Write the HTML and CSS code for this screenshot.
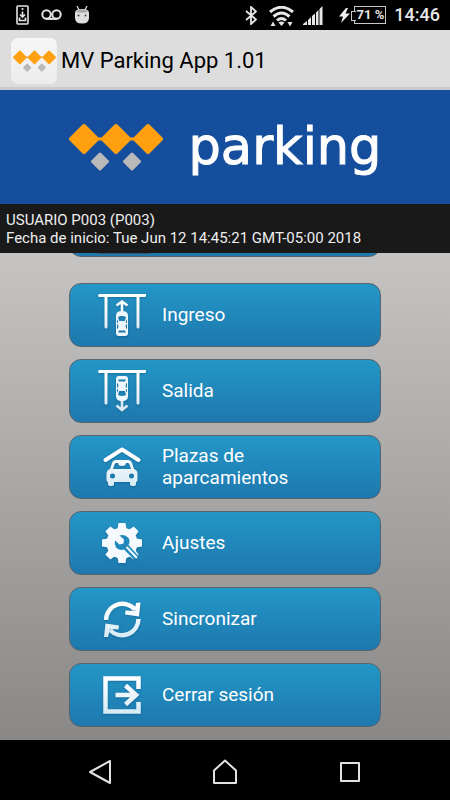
FILE: index.html
```html
<!DOCTYPE html>
<html lang="es">
<head>
<meta charset="utf-8">
<meta name="viewport" content="width=device-width, initial-scale=1">
<title>MV Parking App</title>
<link rel="stylesheet" href="styles.css">
</head>
<body>
<svg class="defs" aria-hidden="true">
  <defs>
    <linearGradient id="ice" gradientUnits="userSpaceOnUse" x1="0" y1="0" x2="0" y2="48">
      <stop offset="0.2" stop-color="#fff"/><stop offset="1" stop-color="#cfe6f3"/>
    </linearGradient>
    <symbol id="mark" viewBox="0 0 94 48">
      <g fill="#ffa010" stroke="#ffa010" stroke-width="4" stroke-linejoin="round">
        <path d="M15 3 28 16 15 29 2 16Z"/><path d="M47 3 60 16 47 29 34 16Z"/><path d="M79 3 92 16 79 29 66 16Z"/>
        <path d="M28 16H66" stroke-width="3"/>
      </g>
      <g fill="#b9b9b9" stroke="#b9b9b9" stroke-width="3" stroke-linejoin="round">
        <path d="M31 31 38.500 38.500 31 46 23.500 38.500Z"/><path d="M63 31 70.500 38.500 63 46 55.500 38.500Z"/>
      </g>
    </symbol>
    <symbol id="car" viewBox="0 0 12 25">
      <path fill="#eef7fb" fill-rule="evenodd" d="M2.500.5Q6-.5 9.500.5 12 1.500 12 4.500V22Q12 25 9 25H3Q0 25 0 22V4.500Q0 1.500 2.500.5ZM2 6 3.200 10H8.800L10 6Q6 4 2 6ZM1 8V12L2.200 11.500V10.500ZM11 8V12L9.800 11.500V10.500ZM1 13.500V18L2.200 17V13.500ZM11 13.500V18L9.800 17V13.500ZM3 19.500 2 21.500H10L9 19.500Z"/>
    </symbol>
  </defs>
</svg>

<header class="status">
  <div class="status-group status-left">
    <svg width="13" height="20" viewBox="0 0 13 20" fill="none" stroke="#e4e4e4"><rect x="1" y="1" width="11" height="18" rx="1" stroke-width="1.600"/><path d="M6.500 3V5M6.500 6.500V12M4 9.500 6.500 12 9 9.500M3.500 12.500V15.500H9.500V12.500" stroke-width="1.700"/></svg>
    <svg width="21" height="12" viewBox="0 0 21 12" fill="none" stroke="#e4e4e4" stroke-width="2"><circle cx="5.500" cy="5.500" r="4.200"/><circle cx="15.500" cy="5.500" r="4.200"/><path d="M5 9.900H16"/></svg>
    <svg width="16" height="18" viewBox="0 0 16 18"><path d="M3 0 5 4M13 0 11 4" stroke="#d8d8d8" stroke-width="1.300"/><path d="M1 7Q1 3 8 3T15 7V12Q15 17.500 8 17.500T1 12Z" fill="#dedede"/><path d="M2 6Q4 3.500 8 3.500T14 6Q8 7.500 2 6" fill="#a7a7a7"/><circle cx="4.500" cy="9.500" r="1" fill="#444"/><circle cx="11.500" cy="9.500" r="1" fill="#444"/></svg>
  </div>
  <div class="status-group status-right">
    <svg width="12" height="19" viewBox="0 0 12 19" fill="none" stroke="#e6e6e6" stroke-width="1.800"><path d="M1 5 11 13.500 6 18V1L11 5.500 1 14"/></svg>
    <svg class="wifi" width="25" height="21" viewBox="0 0 25 21"><g fill="none" stroke="#e6e6e6" stroke-width="3"><path d="M1 6Q12.500-3.500 24 6M4.500 10.500Q12.500 3.500 20.500 10.500M8 14.500Q12.500 10.500 17 14.500"/></g><path d="M9.500 16.500Q12.500 14.500 15.500 16.500L12.500 20ZM1.500 20 4 15.500 6.500 20ZM18.500 16H23.500L21 20.500Z" fill="#e6e6e6"/></svg>
    <svg width="20" height="19" viewBox="0 0 20 19" fill="#e6e6e6"><path d="M0 19V18L4 15V19ZM5 19V14L8 11V19ZM9 19V10L12 7.500V19ZM13 19V6.500L15.500 4V19ZM16.500 19V3L19.500 0V19Z"/></svg>
    <svg class="bolt" width="11" height="15" viewBox="0 0 11 15"><path d="M7 0 0 8.500H4L2 15 11 5.500H6.500L9 0Z" fill="#f2f2f2"/></svg>
    <span class="battery">71 %</span>
    <span class="clock">14:46</span>
  </div>
</header>

<div class="titlebar">
  <span class="app-icon"><svg width="43" height="22" viewBox="0 0 94 48"><use href="#mark"/></svg></span>
  <h1>MV Parking App 1.01</h1>
</div>

<div class="banner">
  <svg width="94" height="48" viewBox="0 0 94 48"><use href="#mark"/></svg>
  <span class="wordmark">parking</span>
</div>

<div class="session">
  <p>USUARIO P003 (P003)</p>
  <p>Fecha de inicio: Tue Jun 12 14:45:21 GMT-05:00 2018</p>
</div>

<main class="menu">
  <button class="item item-first" type="button" aria-label="Menú"><span class="item-shade"></span></button>
  <button class="item" type="button">
    <svg class="icon" viewBox="0 0 48 48"><g fill="none" stroke="url(#ice)" stroke-width="3" stroke-linecap="round"><path d="M1.500 4.500H46.500V4.600M8 5V36M40 5V36"/><path d="M24 21V10M18.500 14.500 24 10.500 29.500 14.500" stroke-linecap="butt" stroke-width="2.600"/></g><use href="#car" x="18" y="20" width="12" height="25"/></svg>
    <span>Ingreso</span>
  </button>
  <button class="item" type="button">
    <svg class="icon" viewBox="0 0 48 48"><g fill="none" stroke="url(#ice)" stroke-width="3" stroke-linecap="round"><path d="M1.500 4.500H46.500V4.600M8 5V36M40 5V36"/><path d="M24 33V43M18.500 38.500 24 43 29.500 38.500" stroke-linecap="butt" stroke-width="2.600"/></g><use href="#car" x="18" y="9" width="12" height="25" transform="rotate(180 24 21.500)"/></svg>
    <span>Salida</span>
  </button>
  <button class="item" type="button">
    <svg class="icon" viewBox="0 0 48 48"><path d="M7.500 17 24 6.500 40.500 17" fill="none" stroke="#fff" stroke-width="4" stroke-linecap="round" stroke-linejoin="round"/><path fill="url(#ice)" fill-rule="evenodd" d="M18 17H30Q33 17 34 20L36 26Q39.500 27 39.500 31V37Q39.500 39 38 39V41Q38 43 35 43T32 41V39H16V41Q16 43 13 43T10 41V39Q8.500 39 8.500 37V31Q8.500 27 12 26L14 20Q15 17 18 17ZM18 20Q17 20 16.500 21.500L15 26H33L31.500 21.500Q31 20 30 20H28Q28 23 24 23T20 20ZM14.500 30.500A2.500 2.500 0 1 0 14.500 35.500 2.500 2.500 0 1 0 14.500 30.500ZM33.500 30.500A2.500 2.500 0 1 0 33.500 35.500 2.500 2.500 0 1 0 33.500 30.500Z"/></svg>
    <span>Plazas de aparcamientos</span>
  </button>
  <button class="item" type="button">
    <svg class="icon" viewBox="0 0 48 48"><g fill="#f4fafd"><circle cx="24" cy="24" r="15.500"/><path id="tooth" d="M19.500 10 20.500 4H27.500L28.500 10V38L27.500 44H20.500L19.500 38Z"/><use href="#tooth" transform="rotate(45 24 24)"/><use href="#tooth" transform="rotate(90 24 24)"/><use href="#tooth" transform="rotate(135 24 24)"/></g><path d="M21.500 16.500Q27 15 30.500 19 32.500 22.500 30.500 26L40 36.500 36 40.500 26 30.500Q21 32 18 28.500 16 25.500 17 21.500L21.500 25.500 25.500 24.500 26 20.500Z" fill="#2188bb"/><path d="M28.500 28 39 39" stroke="#f4fafd" stroke-width="2"/></svg>
    <span>Ajustes</span>
  </button>
  <button class="item" type="button">
    <svg class="icon" viewBox="0 0 48 48"><g fill="none" stroke="url(#ice)" stroke-width="4.500"><path d="M8 25A16.500 16.500 0 0 1 37 14.500"/><path d="M40.500 24A16.500 16.500 0 0 1 12 35"/></g><path fill="url(#ice)" d="M38 8 42.500 7.500 41 21.500 27 19.500 27.500 15.500 36.500 16ZM6 42 7.500 28.500 21 30.500 20.500 34.500 12 34 10 42Z"/></svg>
    <span>Sincronizar</span>
  </button>
  <button class="item" type="button">
    <svg class="icon" viewBox="0 0 48 48"><g fill="none" stroke="url(#ice)" stroke-width="4.500"><path d="M40.500 18V7.500H7.500V40.500H40.500V31"/><path d="M17.500 24H38M27.500 14.500 38 24 27.500 33.500"/></g></svg>
    <span>Cerrar sesión</span>
  </button>
</main>

<nav class="navbar">
  <button type="button" aria-label="Atrás"><svg width="26" height="26" viewBox="0 0 26 26"><path d="M23 2V24L3 13Z"/></svg></button>
  <button type="button" aria-label="Inicio"><svg width="26" height="26" viewBox="0 0 26 26"><path d="M13 1.500 24 11.500V24H2V11.500Z"/></svg></button>
  <button type="button" aria-label="Recientes"><svg width="26" height="26" viewBox="0 0 26 26"><rect x="4" y="4" width="18" height="18"/></svg></button>
</nav>
</body>
</html>
```
FILE: styles.css
```css
* {
  box-sizing: border-box;
}

body {
  margin: 0;
  height: 100vh;
  display: flex;
  flex-direction: column;
  overflow: hidden;
  background: #000;
  color: #fff;
  font-family: Roboto, "Liberation Sans", sans-serif;
}

svg {
  display: block;
  flex: none;
}

button {
  font: inherit;
  color: inherit;
}

.defs {
  position: absolute;
  width: 0;
  height: 0;
}

.status {
  flex: none;
  height: 30px;
  padding: 0 10px 0 16px;
  display: flex;
  align-items: center;
  justify-content: space-between;
  color: #e6e6e6;
}

.status-group {
  display: flex;
  align-items: center;
}

.status-left {
  gap: 12px;
}

.status-right {
  gap: 12px;
}

.wifi {
  margin-top: 2px;
  margin-right: -3px;
}

.bolt {
  margin-left: 4px;
}

.battery {
  position: relative;
  height: 18px;
  padding: 0 1px 0 2px;
  border: 1px solid #c8c8c8;
  font-size: 13px;
  font-weight: 700;
  line-height: 16px;
  margin: 0 -4px 0 -8px;
}

.battery::before {
  content: "";
  position: absolute;
  left: -4px;
  top: 4px;
  width: 4px;
  height: 8px;
  border: 1px solid #c8c8c8;
  border-right: 0;
  background: #000;
}

.clock {
  font-size: 18px;
  font-weight: 500;
  line-height: 20px;
}

.titlebar {
  flex: none;
  height: 60px;
  padding-left: 11px;
  display: flex;
  align-items: center;
  gap: 4px;
  background: #ddd;
  border-bottom: 3px solid #cbcbcb;
  color: #000;
}

.app-icon {
  width: 46px;
  height: 46px;
  display: grid;
  place-items: center;
  border-radius: 7px;
  background: linear-gradient(#f7f7f7, #ececec);
  margin-top: 4px;
}

.titlebar h1 {
  margin: 4px 0 0;
  font-size: 22px;
  font-weight: 400;
  line-height: 28px;
}

.banner {
  flex: none;
  height: 114px;
  display: flex;
  align-items: center;
  justify-content: center;
  gap: 26px;
  background: #164e9e;
}

.wordmark {
  font-family: "DejaVu Sans", sans-serif;
  font-size: 51px;
  line-height: 60px;
  -webkit-text-stroke: 1px #fff;
}

.session {
  flex: none;
  padding: 7px 6px 6px;
  background: #191919;
  color: #eee;
  font-size: 15px;
  line-height: 18px;
}

.session p {
  margin: 0;
}

.menu {
  flex: 1;
  min-height: 0;
  padding: 0 69px 13px;
  display: flex;
  flex-direction: column;
  justify-content: flex-end;
  gap: 12px;
  overflow: hidden;
  background: linear-gradient(to bottom, #c6c4c2, #8a8886);
}

.item {
  flex: none;
  height: 64px;
  padding: 0 60px 0 28px;
  display: flex;
  align-items: center;
  gap: 16px;
  border: 1px solid #58636a;
  border-radius: 12px;
  background: linear-gradient(#2397c6, #1e78ae);
  font-size: 19px;
  line-height: 22px;
  text-align: left;
}

.item-first {
  margin-bottom: 14px;
  align-items: flex-end;
  padding-left: 26px;
}

.item-shade {
  width: 56px;
  height: 20px;
  margin-bottom: 2px;
  border-radius: 4px;
  background: #34586c;
}

.icon {
  width: 48px;
  height: 48px;
  filter: drop-shadow(0 1px 1px rgba(0, 50, 90, 0.3));
}

.navbar {
  flex: none;
  height: 60px;
  padding: 4px 38px 0;
  display: grid;
  grid-template-columns: repeat(3, 1fr);
}

.navbar button {
  padding: 0;
  border: 0;
  background: none;
  display: grid;
  place-items: center;
}

.navbar svg {
  fill: none;
  stroke: #e2e2e2;
  stroke-width: 2px;
  stroke-linejoin: round;
}
```
